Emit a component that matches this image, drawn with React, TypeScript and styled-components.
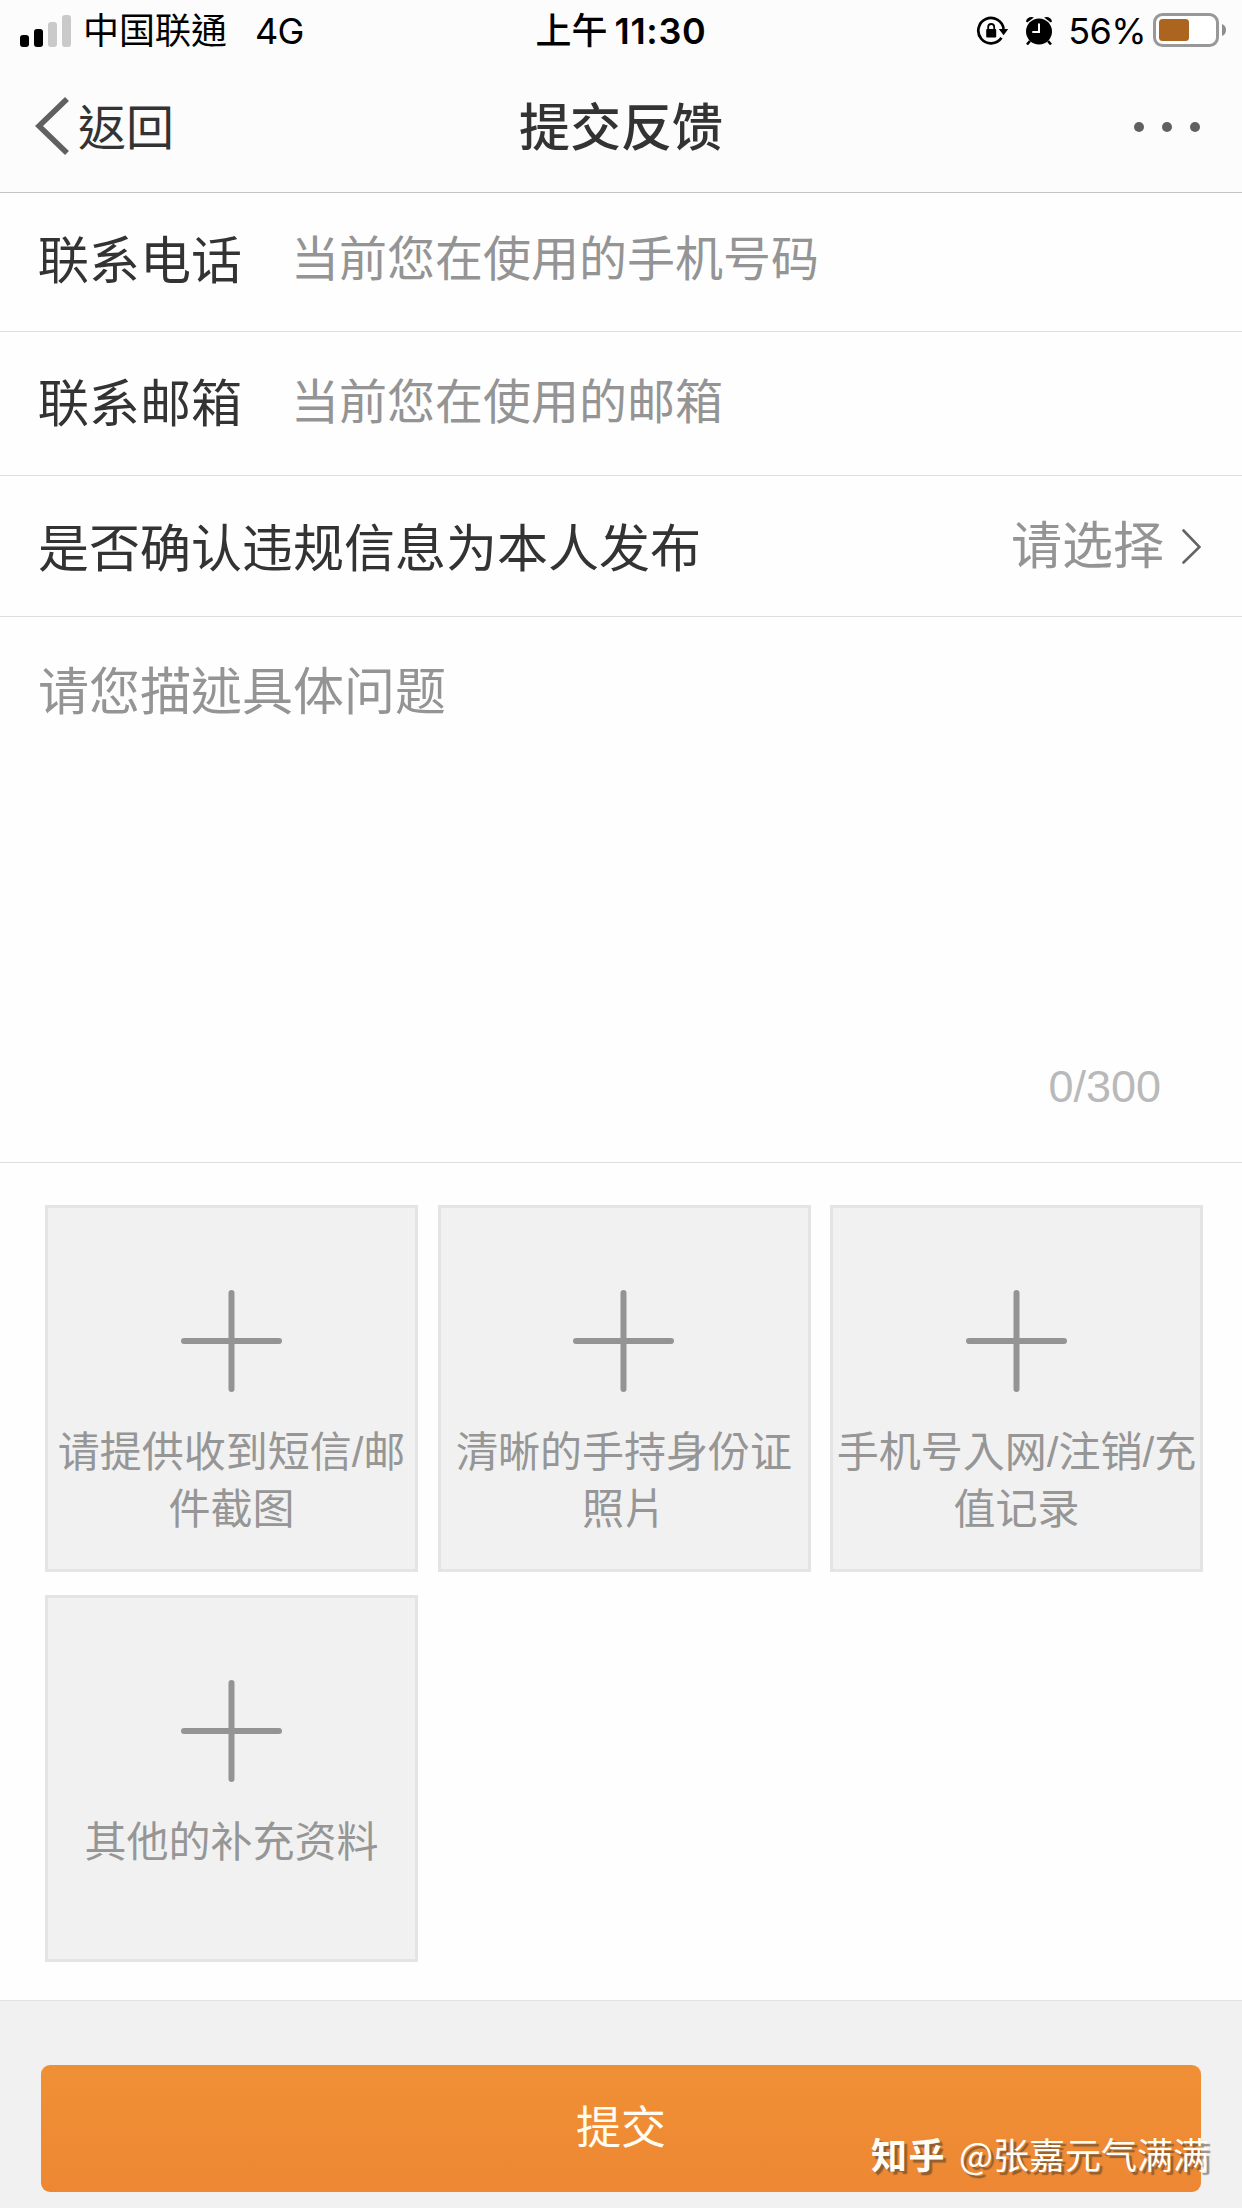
import React from "react";
import styled, { createGlobalStyle } from "styled-components";

const cjk = `"Noto Sans CJK TC", "Noto Sans CJK SC", sans-serif`;

const GlobalStyle = createGlobalStyle`
  * { box-sizing: border-box; }
  body { margin: 0; background: #fefefe; font-family: "Liberation Sans", ${cjk}; }
`;

const Screen = styled.main`
  width: 1242px;
  height: 2208px;
  display: flex;
  flex-direction: column;
  overflow: hidden;
  background: #fefefe;
  color: #333;
`;

const Header = styled.header`
  height: 193px;
  background: #fcfcfc;
  border-bottom: 1px solid #c4c4c4;
`;

const StatusBar = styled.div`
  height: 62px;
  display: grid;
  grid-template-columns: 1fr auto 1fr;
  align-items: center;
  padding: 0 20px;
  color: #000;
  font: 400 36px/62px Inter, ${cjk};
`;

const StatusLeft = styled.div`
  display: flex;
  align-items: center;
`;

const SignalBars = styled.div`
  display: flex;
  align-items: flex-end;
  gap: 5px;
  height: 32px;
  margin-right: 12px;
`;

const SignalBar = styled.span<{ $height: number; $on?: boolean }>`
  width: 9px;
  height: ${(p) => p.$height}px;
  border-radius: 3px;
  background: ${(p) => (p.$on ? "#000" : "#cacaca")};
`;

const Network = styled.span`
  margin-left: 28px;
  letter-spacing: -0.8px;
`;

const Clock = styled.div`
  display: flex;
  gap: 7px;
  font-weight: 500;
`;

const ClockDigits = styled.span`
  font-weight: 600;
  letter-spacing: 0.7px;
`;

const StatusRight = styled.div`
  display: flex;
  align-items: center;
  justify-content: flex-end;
  margin-right: -6px;
`;

const AlarmSlot = styled.span`
  display: flex;
  margin-left: 15px;
`;

const Percent = styled.span`
  margin: 0 7px 0 15px;
  letter-spacing: -0.6px;
`;

const NavBar = styled.nav`
  height: 130px;
  display: grid;
  grid-template-columns: 1fr auto 1fr;
  align-items: center;
  padding: 0 42px;
`;

const Back = styled.div`
  display: flex;
  align-items: center;
  gap: 9px;
  margin-left: -7px;
  font-size: 48px;
  line-height: 72px;
`;

const BackText = styled.span`
  padding-top: 4px;
`;

const Title = styled.h1`
  margin: 0;
  padding-top: 3px;
  font-size: 51px;
  line-height: 72px;
  font-weight: 500;
`;

const More = styled.div`
  display: flex;
  justify-content: flex-end;
  gap: 18px;
`;

const Dot = styled.span`
  width: 10px;
  height: 10px;
  border-radius: 50%;
  background: #606060;
`;

const Row = styled.div<{ $height: number; $drop?: number }>`
  height: ${(p) => p.$height}px;
  display: flex;
  align-items: center;
  padding: ${(p) => p.$drop ?? 0}px 41px 0 38px;
  border-bottom: 1px solid #dedede;
`;

const Label = styled.span`
  font-size: 51px;
  line-height: 76px;
`;

const Hint = styled.span`
  margin: 0 0 4px 49px;
  font-size: 48px;
  line-height: 72px;
  color: #949494;
`;

const Choice = styled.span`
  display: flex;
  align-items: center;
  gap: 17px;
  margin-left: auto;
  margin-bottom: 6px;
  font-size: 51px;
  line-height: 76px;
  color: #949494;
`;

const Description = styled.section`
  height: 546px;
  display: flex;
  flex-direction: column;
  justify-content: space-between;
  padding: 38px 81px 49px 38px;
  border-bottom: 1px solid #dedede;
  font-size: 51px;
  line-height: 76px;
  color: #949494;
`;

const Counter = styled.span`
  align-self: flex-end;
  font-size: 45px;
  line-height: 52px;
  color: #b9b9b9;
`;

const Uploads = styled.section`
  height: 837px;
  display: grid;
  grid-template-columns: repeat(3, 373px);
  grid-auto-rows: 367px;
  gap: 23px 19.5px;
  padding: 42px 0 0 45px;
`;

const Tile = styled.div`
  display: flex;
  flex-direction: column;
  align-items: center;
  gap: 32px;
  padding-top: 82px;
  border: 3px solid #e4e4e4;
  background: #f1f1f1;
  color: #969696;
`;

const TileText = styled.div`
  font-size: 42px;
  line-height: 57px;
  text-align: center;
  white-space: nowrap;
`;

const Footer = styled.footer`
  position: relative;
  flex: 1;
  padding: 64px 41px 16px;
  border-top: 1px solid #e2e2e2;
  background: #f1f1f1;
`;

const Submit = styled.button`
  display: block;
  width: 100%;
  height: 127px;
  padding: 0 0 8px;
  border: 0;
  border-radius: 9px;
  background: linear-gradient(#f09036, #ed8733);
  color: #fffdf2;
  font: 400 45px/119px ${cjk};
`;

const Watermark = styled.div`
  position: absolute;
  right: 33px;
  bottom: 28px;
  display: flex;
  gap: 13px;
  color: #fffdf5;
  font: 400 36px/54px "Noto Sans CJK SC", sans-serif;
  text-shadow: 3px 3px 1px rgba(70, 60, 50, 0.55);
`;

const Brand = styled.span`
  font-weight: 700;
  letter-spacing: 1.5px;
`;

const RotationLock = () => (
  <svg width="34" height="32" viewBox="0 0 34 32" fill="none">
    <path d="M25.5 22.8A12.7 12.7 0 1 1 27.6 14" stroke="#000" strokeWidth="2.7" />
    <path d="M22.8 14H32.2L27.6 20.2Z" fill="#000" />
    <rect x="10.2" y="14" width="10" height="8.4" rx="1" fill="#000" />
    <path d="M12.2 14.5V12a3 3 0 0 1 6 0v2.5" stroke="#000" strokeWidth="1.8" />
  </svg>
);

const Alarm = () => (
  <svg width="28" height="32" viewBox="0 0 28 32" fill="none">
    <circle cx="14" cy="16.5" r="13" fill="#000" />
    <path d="M1 6.5C1.6 2.5 5.4 1 9 2.4L2.2 7.6ZM27 6.5C26.4 2.5 22.6 1 19 2.4L25.8 7.6Z" fill="#000" />
    <path d="M5 26l-3 3.5M23 26l3 3.5" stroke="#000" strokeWidth="2.6" />
    <path d="M14 8.5V17H7.3" stroke="#fff" strokeWidth="2" />
  </svg>
);

const Battery = () => (
  <svg width="75" height="36" viewBox="0 0 75 36" fill="none">
    <rect x="1.5" y="1.5" width="63" height="31" rx="8" fill="#fff" stroke="#989898" strokeWidth="3" />
    <rect x="6" y="6" width="30" height="22" rx="3.5" fill="#ab651f" />
    <path d="M69 11Q73 12.5 73 17T69 23Z" fill="#8e8e8e" />
  </svg>
);

const BackArrow = () => (
  <svg width="34" height="60" viewBox="0 0 34 60" fill="none">
    <path d="M32 2L4 29L32 56" stroke="#606060" strokeWidth="5.6" />
  </svg>
);

const Chevron = () => (
  <svg width="20" height="36" viewBox="0 0 20 36" fill="none">
    <path d="M2.5 1.5L18.5 18L2.5 33.5" stroke="#646464" strokeWidth="2.6" strokeLinecap="round" />
  </svg>
);

const Plus = () => (
  <svg width="102" height="102" viewBox="0 0 102 102">
    <path d="M50.5 3V99M3 51H98" stroke="#949494" strokeWidth="6" strokeLinecap="round" />
  </svg>
);

const tiles = [
  ["请提供收到短信/邮", "件截图"],
  ["清晰的手持身份证", "照片"],
  ["手机号入网/注销/充", "值记录"],
  ["其他的补充资料"],
];

export default function App() {
  return (
    <Screen>
      <GlobalStyle />
      <Header>
        <StatusBar>
          <StatusLeft>
            <SignalBars>
              <SignalBar $height={12} $on />
              <SignalBar $height={18} $on />
              <SignalBar $height={25} />
              <SignalBar $height={32} />
            </SignalBars>
            <span>中国联通</span>
            <Network>4G</Network>
          </StatusLeft>
          <Clock>
            <span>上午</span>
            <ClockDigits>11:30</ClockDigits>
          </Clock>
          <StatusRight>
            <RotationLock />
            <AlarmSlot>
              <Alarm />
            </AlarmSlot>
            <Percent>56%</Percent>
            <Battery />
          </StatusRight>
        </StatusBar>
        <NavBar>
          <Back>
            <BackArrow />
            <BackText>返回</BackText>
          </Back>
          <Title>提交反馈</Title>
          <More>
            <Dot />
            <Dot />
            <Dot />
          </More>
        </NavBar>
      </Header>
      <Row $height={139}>
        <Label>联系电话</Label>
        <Hint>当前您在使用的手机号码</Hint>
      </Row>
      <Row $height={144} $drop={3}>
        <Label>联系邮箱</Label>
        <Hint>当前您在使用的邮箱</Hint>
      </Row>
      <Row $height={141} $drop={8}>
        <Label>是否确认违规信息为本人发布</Label>
        <Choice>
          请选择
          <Chevron />
        </Choice>
      </Row>
      <Description>
        <span>请您描述具体问题</span>
        <Counter>0/300</Counter>
      </Description>
      <Uploads>
        {tiles.map((lines) => (
          <Tile key={lines[0]}>
            <Plus />
            <TileText>
              {lines.map((line) => (
                <div key={line}>{line}</div>
              ))}
            </TileText>
          </Tile>
        ))}
      </Uploads>
      <Footer>
        <Submit>提交</Submit>
        <Watermark>
          <Brand>知乎</Brand>
          <span>@张嘉元气满满</span>
        </Watermark>
      </Footer>
    </Screen>
  );
}
